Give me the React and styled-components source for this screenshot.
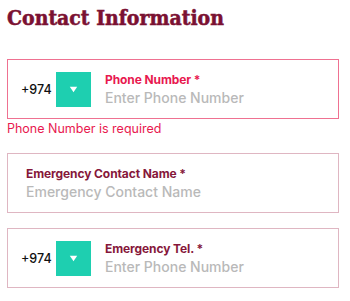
import React from "react";
import styled, { createGlobalStyle } from "styled-components";

const GlobalStyle = createGlobalStyle`
  html, body { margin: 0; padding: 0; background: #ffffff; }
  body { font-family: Inter, "Open Sans", sans-serif; }
`;

const Page = styled.div`
  padding: 0 11px 0 7px;
  width: 350px;
  box-sizing: border-box;
`;

const Title = styled.h2`
  margin: 0;
  padding-top: 5px;
  height: 59px;
  box-sizing: border-box;
  font-family: "DejaVu Serif Condensed", "DejaVu Serif", serif;
  font-weight: 900;
  font-size: 21px;
  line-height: 26px;
  color: #7b1132;
  -webkit-text-stroke: 0.5px #7b1132;
`;

const Group = styled.div`
  margin-bottom: ${(p) => p.$gap}px;
`;

const Box = styled.div`
  height: 60px;
  box-sizing: border-box;
  border: 1px solid ${(p) => (p.$error ? "#ef7191" : "#dfb6c2")};
  display: flex;
  align-items: center;
  padding-left: ${(p) => p.$pad}px;
`;

const Code = styled.span`
  font-family: Inter, sans-serif;
  font-size: 12.5px;
  font-weight: 500;
  color: #111;
  width: 35px;
`;

const Picker = styled.div`
  width: 35px;
  height: 35px;
  background: #1ecfb0;
  display: flex;
  align-items: center;
  justify-content: center;
  margin-right: 14px;
  flex-shrink: 0;
`;

const Texts = styled.div`
  display: flex;
  flex-direction: column;
`;

const Label = styled.span`
  font-family: Inter, sans-serif;
  font-size: 12px;
  font-weight: 700;
  line-height: 16px;
  letter-spacing: -0.1px;
  color: ${(p) => (p.$error ? "#e8194f" : "#86173a")};
`;

const Placeholder = styled.span`
  font-family: Inter, sans-serif;
  font-size: 14px;
  font-weight: 500;
  line-height: 19px;
  color: #b9b9b9;
`;

const ErrorText = styled.div`
  font-family: Inter, sans-serif;
  font-size: 12.5px;
  line-height: 18px;
  color: #e8194f;
  padding-top: 1px;
`;

const Caret = () => (
  <svg width="9" height="7" viewBox="0 0 9 7">
    <polygon points="0.8,0.8 8.2,0.8 4.5,6.3" fill="#ffffff" />
  </svg>
);

const PhoneField = ({ label, error }) => (
  <Box $error={error} $pad={13}>
    <Code>+974</Code>
    <Picker>
      <Caret />
    </Picker>
    <Texts>
      <Label $error={error}>{label} *</Label>
      <Placeholder>Enter Phone Number</Placeholder>
    </Texts>
  </Box>
);

export default function App() {
  return (
    <>
      <GlobalStyle />
      <Page>
        <Title>Contact Information</Title>
        <Group $gap={15}>
          <PhoneField label="Phone Number" error />
          <ErrorText>Phone Number is required</ErrorText>
        </Group>
        <Group $gap={15}>
          <Box $pad={18}>
            <Texts>
              <Label>Emergency Contact Name *</Label>
              <Placeholder>Emergency Contact Name</Placeholder>
            </Texts>
          </Box>
        </Group>
        <Group $gap={0}>
          <PhoneField label="Emergency Tel." />
        </Group>
      </Page>
    </>
  );
}
